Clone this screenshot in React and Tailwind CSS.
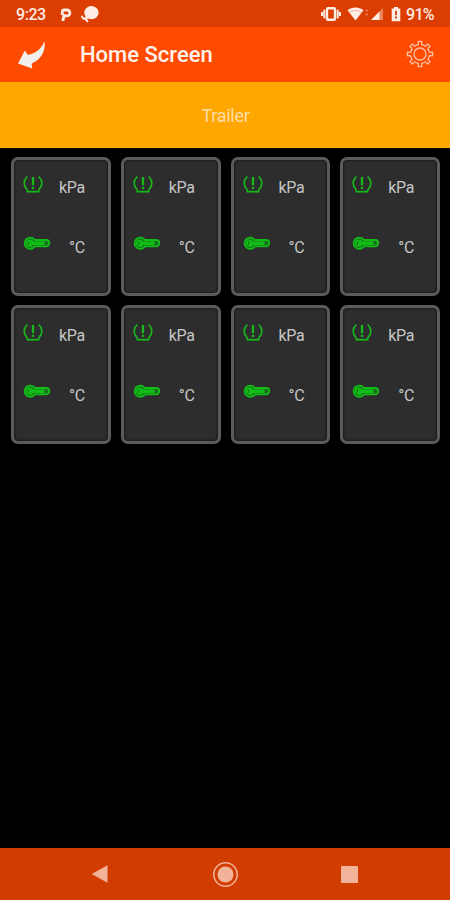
import React from "react";

const sensors = [1, 2, 3, 4, 5, 6, 7, 8];

const StatusBar = () => (
  <div className="flex h-[27px] w-full items-center bg-[#dc3d00] text-[#ffece4]">
    <span className="mt-[3px] ml-4 w-[31px] text-[16px] leading-none font-medium tracking-[-0.45px]">9:23</span>
    <svg className="mt-[2px] ml-[13px]" width="12" height="14" viewBox="0 0 12 14" fill="none">
      <path d="M2.300 7V3.500Q2.300 2 4 2H7a2.900 2.900 0 0 1 0 5.800H4.500" stroke="currentColor" strokeWidth="2.800" />
      <path d="M4.300 6 2.800 13" stroke="currentColor" strokeWidth="3" />
    </svg>
    <svg className="ml-[9px]" width="18" height="18" viewBox="0 0 18 18" fill="none">
      <ellipse cx="10.400" cy="7.600" rx="7.200" ry="6.600" fill="currentColor" />
      <path d="M7 11 4.500 14" stroke="currentColor" strokeWidth="3" />
      <path d="M1 11.500c.4 1.600 1.400 2.300 2.800 2.500 1.200.2 2 1 2.600 2.300" stroke="currentColor" strokeWidth="2" strokeLinecap="round" />
    </svg>

    <svg className="ml-auto" width="20" height="16" viewBox="0 0 20 16" fill="none">
      <rect x="6" y="2.200" width="8" height="11.600" rx="1" stroke="currentColor" strokeWidth="2.400" />
      <path d="M3.300 3.800v8.400M16.700 3.800v8.400M1 6v4M19 6v4" stroke="currentColor" strokeWidth="2" />
    </svg>
    <svg className="ml-[6px]" width="22" height="16" viewBox="0 0 22 16">
      <path d="M.5 4.200C5 .7 12 .7 16.500 4.200L8.500 14.600z" fill="currentColor" />
      <path d="M2.500 6.300c4-2.500 8-2.500 12 0" stroke="#dc3d00" strokeOpacity=".3" fill="none" />
      <path d="M18.600 4.500h2M18.600 8.500h2" stroke="currentColor" strokeOpacity=".4" strokeWidth="2" />
    </svg>
    <svg className="mt-[1px] ml-[1px]" width="14" height="14" viewBox="0 0 14 14">
      <path d="M13 1v12H1z" fill="currentColor" fillOpacity=".4" />
      <path d="M9.500 4.500V13H1z" fill="currentColor" />
    </svg>
    <svg className="ml-[7px]" width="10" height="16" viewBox="0 0 10 16">
      <path d="M3 1h4v1.500h2.300v12.700H.7V2.500H3z" fill="currentColor" />
      <path d="M5 4.800v4.400M5 10.600v1.800" stroke="#c73700" strokeWidth="1.700" />
    </svg>
    <span className="mt-[3px] mr-[13px] ml-[5px] w-[31px] text-[16px] leading-none font-medium tracking-[-0.7px]">91%</span>
  </div>
);

const GearIcon = () => {
  const points = [];
  for (let i = 0; i < 8; i++) {
    [[-19, 9.5], [-10, 9.5], [-8, 12.7], [8, 12.7], [10, 9.5], [19, 9.5]].forEach(([offset, radius]) => {
      const angle = ((i * 45 + offset) * Math.PI) / 180;
      points.push(`${14 + radius * Math.sin(angle)},${14 - radius * Math.cos(angle)}`);
    });
  }
  return (
    <svg width="28" height="28" viewBox="0 0 28 28" fill="none" stroke="#ffc0a6" strokeWidth="1.300" strokeLinejoin="round">
      <polygon points={points.join(" ")} />
      <circle cx="14" cy="14" r="6" />
    </svg>
  );
};

const TopBar = () => (
  <div className="flex h-[55px] w-full items-center bg-[#ff4b00]">
    <svg className="ml-[17px]" width="29" height="30" viewBox="0 0 29 30">
      <path d="M27.300 1.300C29 9.500 25.500 18.500 14.600 23.800L15.300 28.500 1 23.500 7.800 10.500 10.800 15C17.500 13.800 24.500 9.500 27.300 1.300z" fill="#f1efec" />
    </svg>
    <h1 className="mt-[1px] ml-[34px] text-[22px] leading-none font-medium text-[#fff1eb]">Home Screen</h1>
    <div className="mr-[16px] mb-[2px] ml-auto">
      <GearIcon />
    </div>
  </div>
);

const TirePressureIcon = () => (
  <svg width="20" height="18" viewBox="0 0 20 18" fill="none" stroke="#16b81b" strokeWidth="1.600">
    <path d="M4.300.5C.3 4.700.2 9.500 4.300 14V16.500M15.700.5c4 4.200 4.100 9 0 13.500V16.500M3.600 15.700h12.800" />
    <path d="M6.500 14.500v2M9 14.500v2M11 14.500v2M13.500 14.500v2" strokeWidth=".8" />
    <path d="M10 1v8.300M10 10.800v2.300" strokeWidth="2.300" />
  </svg>
);

const ThermometerIcon = () => (
  <svg width="28" height="14" viewBox="0 0 28 14" fill="none" stroke="#12bd18" strokeWidth="1.800">
    <path d="M11.800 4h11.300a3.200 3.200 0 0 1 0 6.400H11.800a5.600 5.600 0 1 1 0-6.400z" fill="#146f18" />
    <circle cx="6.700" cy="7.200" r="2.800" strokeWidth="1.800" />
    <path d="M6 7.200h15.500" strokeWidth="3.600" />
  </svg>
);

const SensorCard = () => (
  <div className="h-[139px] rounded-[7px] border-[3px] border-[#5b5b5b] bg-[#2d2d2d] pt-4 pr-[23px] pl-[9px] text-[16px] leading-[18px] tracking-[-0.35px] text-[#c6c6c6] shadow-[inset_0_0_2px_1px_#1b1b1b]">
    <div className="flex h-[59px] items-start justify-between">
      <TirePressureIcon />
      <span className="mt-[3px]">kPa</span>
    </div>
    <div className="flex items-start justify-between">
      <div className="mt-[1px]">
        <ThermometerIcon />
      </div>
      <span className="mt-[4px]">°C</span>
    </div>
  </div>
);

const NavigationBar = () => (
  <div className="flex h-[52px] w-full items-center bg-[#d13d00] text-[#f2b39b]">
    <svg className="ml-[91px]" width="17" height="18" viewBox="0 0 17 18">
      <path d="M16.500.3v17.400L.8 9z" fill="currentColor" />
    </svg>
    <svg className="ml-[104px]" width="27" height="27" viewBox="0 0 27 27">
      <circle cx="13.500" cy="13.500" r="11.700" fill="none" stroke="currentColor" strokeWidth="1.500" />
      <circle cx="13.500" cy="13.500" r="8" fill="currentColor" />
    </svg>
    <div className="ml-[102px] h-[17px] w-[17px] rounded-[1px] bg-current" />
  </div>
);

export default function App() {
  return (
    <div className="flex h-[900px] w-[450px] flex-col overflow-hidden bg-black font-['Roboto',sans-serif]">
      <StatusBar />
      <TopBar />
      <div className="flex h-[66px] items-center justify-center bg-[#ffa600] pl-[1px] text-[18px] tracking-[-0.3px] text-[#ffdda5]">
        Trailer
      </div>
      <main className="grid flex-1 grid-cols-4 content-start gap-x-[10px] gap-y-[9px] pt-[9px] pr-[10px] pl-[11px]">
        {sensors.map((id) => (
          <SensorCard key={id} />
        ))}
      </main>
      <NavigationBar />
    </div>
  );
}
